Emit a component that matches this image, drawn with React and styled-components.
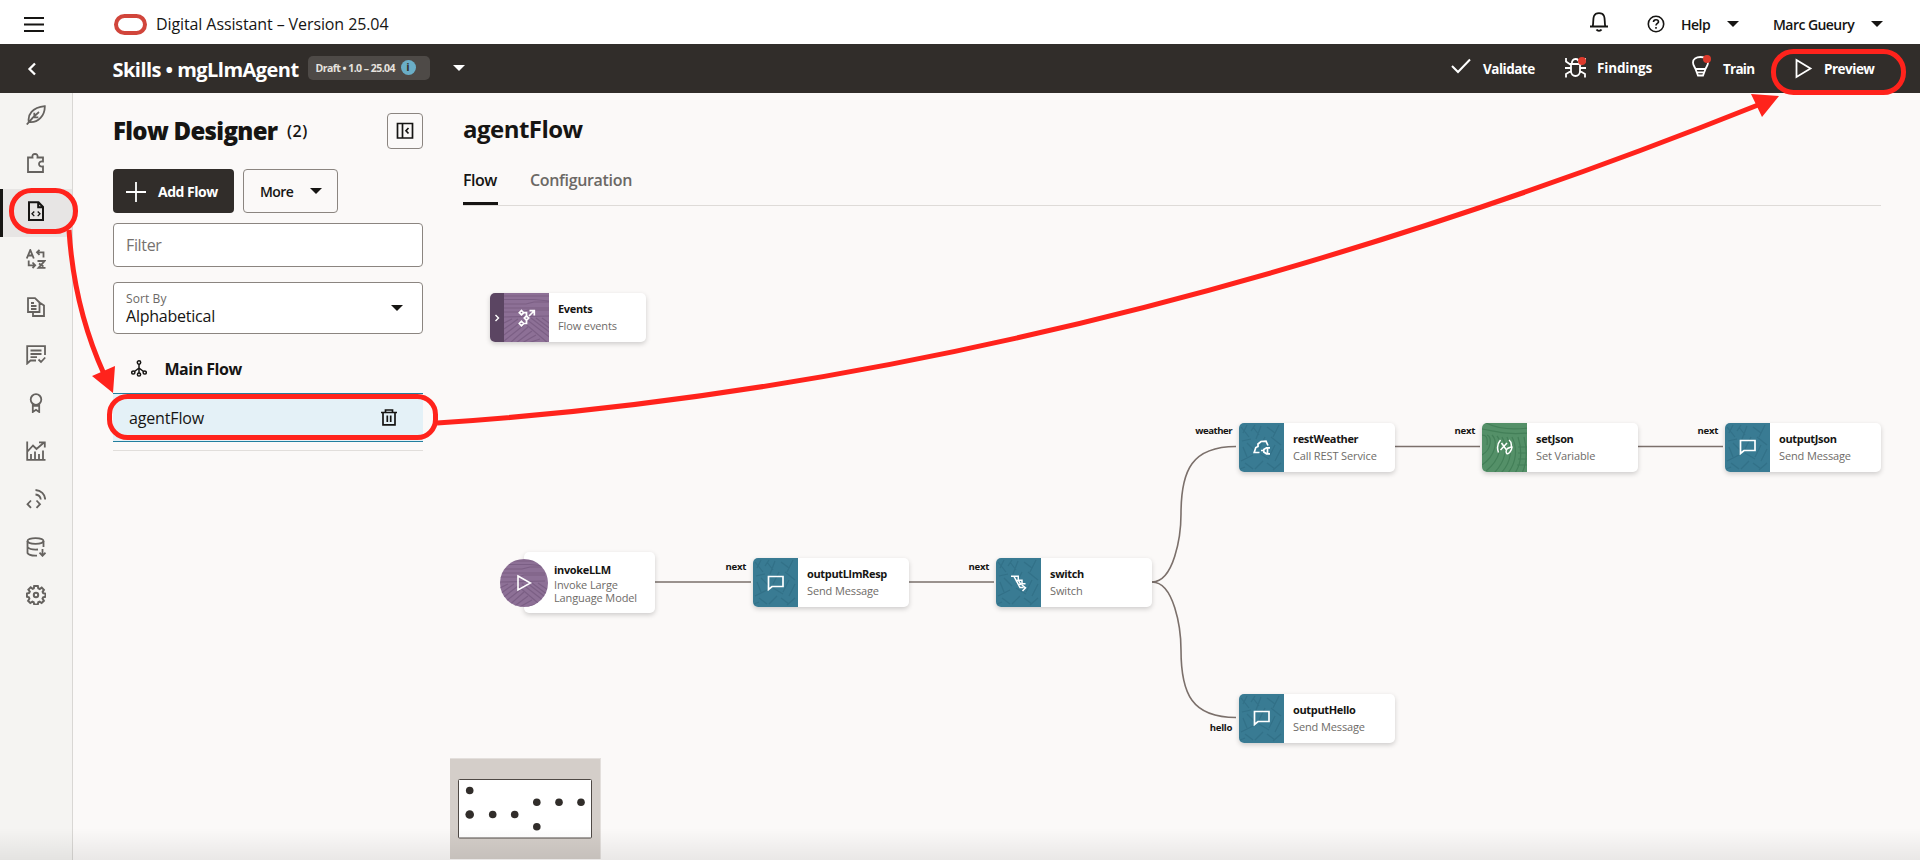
import React from "react";
import styled, { createGlobalStyle } from "styled-components";

const GlobalStyle = createGlobalStyle`
  *, *::before, *::after { box-sizing: border-box; }
  body {
    margin: 0;
    background: #fbf9f8;
    color: #161513;
    font-family: "Open Sans", "Noto Sans", sans-serif;
    overflow: hidden;
  }
  svg { display: block; flex: none; }
`;

const Page = styled.div`
  position: relative;
  width: 1920px;
  height: 860px;
  display: flex;
  flex-direction: column;
  overflow: hidden;
`;

const Label = styled.span`
  display: block;
  flex: none;
  white-space: nowrap;
  width: ${(p) => (p.$w ? `${p.$w}px` : "auto")};
  font-size: ${(p) => p.$size || 14}px;
  font-weight: ${(p) => p.$weight || 400};
  letter-spacing: ${(p) => p.$track || 0}px;
  line-height: ${(p) => p.$line || 20}px;
  color: ${(p) => p.$color || "inherit"};
  margin-left: ${(p) => p.$gap || 0}px;
  margin-top: ${(p) => p.$top || 0}px;
`;

const TopBar = styled.header`
  height: 44px;
  flex: none;
  display: flex;
  align-items: center;
  padding: 4px 37px 0 24px;
  background: #fff;
`;

const Caret = styled.i`
  flex: none;
  width: 0;
  height: 0;
  border: 6px solid transparent;
  border-top: 6.5px solid currentColor;
  border-bottom: 0;
  margin-left: ${(p) => p.$gap || 0}px;
  margin-bottom: ${(p) => p.$lift || 0}px;
`;

const OracleMark = styled.div`
  width: 33px;
  height: 21px;
  margin-left: 70px;
  border: 4px solid #d1453b;
  border-radius: 11px;
`;

const Spacer = styled.div`
  flex: 1;
`;

const IconSlot = styled.span`
  position: relative;
  display: block;
  flex: none;
  margin-left: ${(p) => p.$gap || 0}px;
  margin-top: ${(p) => p.$top || 0}px;
`;

const SkillBar = styled.div`
  height: 49px;
  flex: none;
  display: flex;
  align-items: center;
  padding: 0 45px 0 27px;
  background: #312d2a;
  color: #fff;
`;

const VersionBadge = styled.div`
  display: flex;
  align-items: center;
  width: 122px;
  height: 24px;
  margin: 0 0 2px 9px;
  padding-left: 8px;
  border-radius: 5px;
  background: #4e4a47;
  color: #e6e2df;
`;

const InfoDot = styled.b`
  width: 15px;
  height: 15px;
  margin-left: 5px;
  border-radius: 50%;
  background: #6aaec7;
  color: #33302d;
  font-size: 11px;
  line-height: 14.5px;
  text-align: center;
`;

const AlertDot = styled.i`
  position: absolute;
  top: ${(p) => p.$top}px;
  right: ${(p) => p.$right}px;
  width: 8px;
  height: 8px;
  border-radius: 50%;
  background: #dd3a2c;
`;

const Body = styled.div`
  flex: 1;
  display: flex;
  min-height: 0;
`;

const Rail = styled.nav`
  width: 73px;
  flex: none;
  background: #f5f4f2;
  border-right: 1px solid #d9d7d4;
`;

const RailItem = styled.div`
  height: 48px;
  display: flex;
  align-items: center;
  justify-content: center;
  padding-bottom: 4px;
  padding-right: ${(p) => (p.$active ? 3 : 0)}px;
  color: ${(p) => (p.$active ? "#161513" : "#65625f")};
  background: ${(p) => (p.$active ? "#e7e5e4" : "transparent")};
  border-left: ${(p) => (p.$active ? "3px solid #161513" : "0")};
`;

const FlowPanel = styled.aside`
  width: 350px;
  flex: none;
  padding: 20px 0 0 40px;
`;

const PanelHead = styled.div`
  display: flex;
  align-items: center;
  height: 36px;
`;

const CollapseButton = styled.button`
  width: 36px;
  height: 36px;
  margin: 0 0 0 auto;
  padding: 0;
  display: grid;
  place-items: center;
  border: 1px solid #8b8580;
  border-radius: 4px;
  background: transparent;
  color: #161513;
`;

const ButtonRow = styled.div`
  display: flex;
  gap: 9px;
  margin: 20px 0 10px;
`;

const Button = styled.button`
  height: 44px;
  width: ${(p) => p.$w}px;
  display: flex;
  align-items: center;
  padding: 1px 0 0 ${(p) => p.$pad}px;
  border: ${(p) => (p.$solid ? "0" : "1px solid #8b8580")};
  border-radius: 4px;
  background: ${(p) => (p.$solid ? "#312d2a" : "transparent")};
  color: ${(p) => (p.$solid ? "#fff" : "#161513")};
  font-family: inherit;
`;

const FilterField = styled.div`
  height: 44px;
  display: flex;
  align-items: center;
  padding: 0 12px;
  border: 1px solid #8b8580;
  border-radius: 4px;
  background: #fff;
`;

const SortField = styled.div`
  height: 52px;
  margin-top: 15px;
  padding: 0 19px 1px 12px;
  display: flex;
  align-items: center;
  justify-content: space-between;
  border: 1px solid #8b8580;
  border-radius: 4px;
  background: #fff;
`;

const MainFlowRow = styled.div`
  height: 59px;
  display: flex;
  align-items: center;
  padding: 10px 0 0 18px;
`;

const FlowRow = styled.div`
  height: 49px;
  display: flex;
  align-items: center;
  justify-content: space-between;
  padding: 0 26px 0 16px;
  background: #e4f1f7;
  border: solid #227e9e;
  border-width: 1px 0;
`;

const PanelRule = styled.div`
  height: 1px;
  margin-top: 8px;
  background: #e1dedb;
`;

const Main = styled.main`
  flex: 1;
  display: flex;
  flex-direction: column;
  padding-left: 27px;
`;

const MainHead = styled.div`
  margin-left: 13px;
  height: 113px;
  width: 1418px;
  padding-top: 26px;
  border-bottom: 1px solid #dedbd8;
`;

const Tabs = styled.div`
  display: flex;
  gap: 32px;
  margin-top: 25px;
`;

const Tab = styled.div`
  height: 41px;
  padding-top: 6px;
  border-bottom: 3px solid ${(p) => (p.$active ? "#161513" : "transparent")};
  color: ${(p) => (p.$active ? "#161513" : "#6b6865")};
`;

/* The designer surface; nodes sit at free coordinates measured from its corner. */
const Canvas = styled.section`
  position: relative;
  flex: 1;
`;

const Edges = styled.svg`
  position: absolute;
  inset: 0;
`;

const EdgeLabel = styled.span`
  position: absolute;
  right: ${(p) => 1470 - p.$x}px;
  top: ${(p) => p.$y - 8}px;
  font-size: 9.6px;
  font-weight: 700;
  letter-spacing: ${(p) => (p.$long ? -0.5 : -0.32)}px;
  line-height: 16px;
`;

const NodeCard = styled.div`
  position: absolute;
  left: ${(p) => p.$x}px;
  top: ${(p) => p.$y}px;
  width: 155.5px;
  height: 49px;
  display: flex;
  overflow: hidden;
  border-radius: 5px;
  background: #fff;
  box-shadow: 0 2px 5px rgba(0, 0, 0, 0.18);
`;

const StartCard = styled(NodeCard)`
  width: 131px;
  height: 61px;
  overflow: visible;
  align-items: center;
`;

const Tile = styled.div`
  width: 45px;
  height: 49px;
  flex: none;
  display: grid;
  grid-template: 100% / 100%;
  place-items: center;
  overflow: hidden;
  color: #fff;
  & > svg { grid-area: 1 / 1; }
`;

const StartDisc = styled(Tile)`
  width: 48px;
  height: 48px;
  margin-left: -24px;
  border-radius: 50%;
`;

const Expander = styled.div`
  width: 14px;
  flex: none;
  display: grid;
  place-items: center;
  background: #5b4562;
  color: #fff;
`;

const NodeText = styled.div`
  padding: ${(p) => (p.$start ? "0 0 1px 6px" : "7px 0 0 9px")};
`;

const NodeName = styled.div`
  font-size: 11px;
  font-weight: 700;
  letter-spacing: -0.34px;
  line-height: 17px;
  white-space: nowrap;
`;

const NodeKind = styled.div`
  font-size: 11px;
  letter-spacing: -0.12px;
  line-height: ${(p) => (p.$start ? 13 : 17)}px;
  color: #6e6b68;
  white-space: pre;
`;

const MiniMap = styled.div`
  position: absolute;
  left: 0;
  bottom: 1px;
  width: 151px;
  height: 101px;
  padding: 20px 9px 0 8px;
  background: #d4cec9;
  border: solid #e3dfdc;
  border-width: 1px 1px 0 0;
`;

const BottomShade = styled.div`
  position: absolute;
  left: 0;
  right: 0;
  bottom: 0;
  height: 32px;
  background: linear-gradient(rgba(0, 0, 0, 0), rgba(0, 0, 0, 0.07));
`;

const Markup = styled.svg`
  position: absolute;
  inset: 0;
`;

function Icon({ w = 20, h = 20, sw = 1.8, children }) {
  return (
    <svg width={w} height={h} viewBox={`0 0 ${w} ${h}`} fill="none" stroke="currentColor" strokeWidth={sw}>
      {children}
    </svg>
  );
}

const railIcons = [
  <Icon key="feather">
    <path d="M2.800 17C1.500 10 6 2.500 18.800 1.200C19 10 12.500 18.200 2.800 17ZM.8 19.500C4 15.500 8 11 13 7M8.300 12V7.800M8 12.300H12.300" />
  </Icon>,
  <Icon key="puzzle">
    <path d="M2 4.500H6.500C6 1.800 7.500 1 9 1s3 .8 2.500 3.500H17V8.500C14.200 8 13 9.500 13 11s1.200 3 4 2.500V19H2Z" />
  </Icon>,
  <Icon key="flow" sw={2}>
    <path d="M3 1.200H12.500L17 6V19H3ZM12.200 1.500V6.200H17" />
    <path d="M8.300 10.500L6 12.800L8.300 15.100M11.700 10.500L14 12.800L11.700 15.100" strokeWidth="1.300" />
  </Icon>,
  <Icon key="translate">
    <path d="M.8 9.500L4.300 1L7.800 9.500M2 6.500H6.800M13.500 .8L11 3.300L13.500 5.800M11 3.300H17.500V8.500M2.700 11.500V16.300H8.800M6.500 13.500L9.200 16.300L6.500 19M11.500 12H18.500L12.500 18.800H19.500M13 14.500L17.500 17.500" />
  </Icon>,
  <Icon key="docs">
    <path d="M2 1.200H9L13.500 5.500V15H2ZM13.500 5.500L18 8.500V19H7V15M5 6H8M5 9H10.500M5 12H10.500" />
  </Icon>,
  <Icon key="survey">
    <path d="M19 10V1.200H1.200V18.500L4.500 15.500H10M4.500 5.500H15.500M4.500 9H15.500M4.500 12.200H11M12.500 14.500L15 17L19.200 12.500" />
  </Icon>,
  <Icon key="ribbon">
    <circle cx="10" cy="6.500" r="5.300" />
    <path d="M6.800 11V19L10 16.800L13.200 19V11M7 12.800H13" />
  </Icon>,
  <Icon key="insights">
    <path d="M1.200 .5V18.900H19.500M1.500 10.500L7 4.500L10.500 8L18 1.500M13 1.300H18.800V6.500M5 18V13M9 18V10.500M13 18V13M17 18V9.500" />
  </Icon>,
  <Icon key="channels">
    <path d="M5 11.500L1.500 15.200L5 18.900M10.500 11.500L14 15.200L10.500 18.900M9.500 5.500C12.500 5.800 14.500 8 14.800 10.500M9.500 1C15 1.300 19 5.300 19.200 10.500" />
  </Icon>,
  <Icon key="data">
    <ellipse cx="9.500" cy="4" rx="8" ry="2.900" />
    <path d="M1.500 4V16C2.500 18 6.500 18.800 11 18.600M17.500 4V10M1.500 10C3.500 12.500 8 12.800 12 12.500M16.500 12V18.500M13.500 15.700L16.500 18.800L19.500 15.700" />
  </Icon>,
  <Icon key="settings" sw={2}>
    <path d="M8.200 1h3.600l.5 2.400 1.400.6 2-1.400 2.200 2.200-1.300 2.100.6 1.300 2.300.5v3.100l-2.400.5-.6 1.300 1.400 2.200-2.300 2.200-2-1.300-1.300.6-.5 2.200H8.200l-.5-2.300-1.300-.5-2.100 1.300-2.200-2.200 1.300-2.100-.5-1.400L.9 11.800V8.500l2.300-.5.6-1.400-1.400-2L4.700 2.400l2 1.400 1.100-.5Z" />
    <circle cx="10" cy="10" r="2.200" />
  </Icon>,
];

const textures = {
  purple: {
    base: "#8d7096",
    line: "#755a7f",
    d: "M0 3H45M0 6.500H30L45 8M0 11H22L30 9H45M0 15H45M0 19H18L24 17H45M0 24L45 23M0 30L8 26M0 36L14 26M0 42L18 28M0 48L20 32M6 50L24 34M12 50L28 38M18 50L32 42M24 50L36 46M22 26L48 46M27 25L48 41M32 25L48 37M38 25L48 32M18 28L44 50",
  },
  teal: {
    base: "#397b93",
    line: "#306d84",
    d: "M2 4L10 14M8 2L4 10M14 4L20 12M22 3L17 16M28 4L36 10M40 2L34 14M3 18L12 16M8 20L16 28M26 14L20 26M32 14L42 22M4 24L8 34M14 32L2 38M20 30L30 36M36 22L30 34M42 26L36 38M6 40L14 46M24 38L16 46M28 40L36 46M42 40L34 47M1 46L6 44M12 8L16 2",
  },
  green: {
    base: "#549068",
    line: "#3e7a53",
    d: "M0 6C14 8 22 12 46 10M4 0C16 6 30 7 46 5M0 12C4 12 6 14 5 22M5 12C10 14 10 26 0 32M10 12C16 18 14 32 0 42M15 13C21 20 19 36 4 48M20 14C26 24 24 38 12 50M25 14C31 26 29 40 19 50M30 14C36 26 34 40 26 50M36 14C40 26 40 40 33 50M42 14C45 26 45 40 40 50M36 24H45M36 30H45M36 36H45M35 42H45",
  },
};

function Texture({ kind, width = 45 }) {
  const t = textures[kind];
  return (
    <svg width={width} height="49" viewBox={`0 0 ${width} 49`}>
      <rect width="48" height="49" fill={t.base} />
      <path d={t.d} fill="none" stroke={t.line} strokeWidth="1.2" opacity="0.75" />
    </svg>
  );
}

const nodeIcons = {
  events: (
    <Icon w={18} h={18} sw={1.7}>
      <path d="M3.500 1.500L5.700 3.700L3.500 5.900L1.300 3.700ZM3.500 12.300L5.700 14.500L3.500 16.700L1.300 14.500ZM8.500 6.800L10.700 9L8.500 11.200L6.300 9ZM5.700 3.700H8.500V6.800M5.700 14.500H8.500V11.200M11 7L16 2M11.500 1.600H16.300V6.500" />
    </Icon>
  ),
  message: (
    <Icon w={18} h={16} sw={1.7}>
      <path d="M1.500 1.500H16V11.500H5L1.500 14.500Z" />
    </Icon>
  ),
  split: (
    <Icon w={18} h={18} sw={1.5}>
      <path d="M1 2.200H8.300V6.500M4 2.500L10 13.500H13.500M8 6.300H12V9.500M8.300 6.300L11.500 11.200M12 9.800H15.500M12 11L15.500 13.800L12.500 17M5.500 6.500L8 6.300M8.500 10.500L12 9.800" />
    </Icon>
  ),
  rest: (
    <Icon w={18} h={18} sw={1.7}>
      <path d="M6.500 14.500H1.200L2.800 9.500L5 8.500V6L8 3.500L13 3.200L15 7.500M8 12.500H10.500M17 9.800H13.500L10.800 11.500V14L13.500 15.800H17M14.500 9.800V15.800" />
    </Icon>
  ),
  variable: (
    <Icon w={18} h={18} sw={1.5}>
      <path d="M4.500 2C1 6 .8 10 2.500 14.500M5.500 5L10.500 12M11 5L4.500 12M13 2C15 3.500 15.600 5.500 15.300 8M16.200 8.500L11.500 10.500C9.800 11.800 9.800 14.500 10.800 15.600C12.300 16.500 15.500 13.500 16.200 8.500" />
    </Icon>
  ),
};

const nodes = [
  { x: 303, y: 352, name: "outputLlmResp", kind: "Send Message", icon: "message", tone: "teal" },
  { x: 546, y: 352, name: "switch", kind: "Switch", icon: "split", tone: "teal" },
  { x: 789, y: 216.500, name: "restWeather", kind: "Call REST Service", icon: "rest", tone: "teal" },
  { x: 1032, y: 216.500, name: "setJson", kind: "Set Variable", icon: "variable", tone: "green" },
  { x: 1275, y: 216.500, name: "outputJson", kind: "Send Message", icon: "message", tone: "teal" },
  { x: 789, y: 487.500, name: "outputHello", kind: "Send Message", icon: "message", tone: "teal" },
];

const edgeLabels = [
  { x: 296, y: 361, text: "next" },
  { x: 539, y: 361, text: "next" },
  { x: 782, y: 225, text: "weather" },
  { x: 1025, y: 225, text: "next" },
  { x: 1268, y: 225, text: "next" },
  { x: 782, y: 522, text: "hello" },
];

const mapDots = [
  [11.7, 11.5, 3.8], [11.7, 35.5, 4.3], [34.7, 35.5, 3.8], [56.7, 35.5, 3.8],
  [78.8, 23.2, 3.8], [101, 23.2, 3.8], [123, 23.2, 3.8], [78.8, 47.8, 3.8],
];

function Node({ x, y, name, kind, icon, tone, expandable }) {
  return (
    <NodeCard $x={x} $y={y}>
      {expandable && (
        <Expander>
          <Icon w={6} h={8} sw={1.4}><path d="M1.500 1L4.500 4L1.500 7" /></Icon>
        </Expander>
      )}
      <Tile>
        <Texture kind={tone} />
        {nodeIcons[icon]}
      </Tile>
      <NodeText>
        <NodeName>{name}</NodeName>
        <NodeKind>{kind}</NodeKind>
      </NodeText>
    </NodeCard>
  );
}

export default function App() {
  return (
    <Page>
      <GlobalStyle />
      <TopBar>
        <Icon w={20} h={16} sw={2}><path d="M0 2H20M0 8.500H20M0 15H20" /></Icon>
        <OracleMark />
        <Label $size={16} $w={234} $track={-0.1} $gap={9} $line={24}>
          Digital Assistant – Version 25.04
        </Label>
        <Spacer />
        <IconSlot $top={-4}>
          <Icon w={18} h={20} sw={1.8}>
            <path d="M0 14.500H18M2.800 14C3.600 11 2.700 7 4 4C5 1.800 7 1.200 9 1.200S13 1.800 14 4C15.300 7 14.400 11 15.200 14M6.500 17.500C7.500 19.200 10.500 19.200 11.500 17.500" />
          </Icon>
        </IconSlot>
        <IconSlot $gap={39}>
          <Icon w={18} h={18} sw={1.6}>
            <circle cx="9" cy="9" r="7.700" />
            <path d="M6.500 7C6.500 5.500 7.600 4.700 9 4.700S11.500 5.600 11.500 6.900C11.500 8.400 9 8.500 9 10.500M9 12V13.700" />
          </Icon>
        </IconSlot>
        <Label $weight={600} $w={29} $track={-0.5} $gap={16} $top={1}>Help</Label>
        <Caret $gap={17} />
        <Label $weight={600} $w={81} $track={-0.55} $gap={34} $top={1}>Marc Gueury</Label>
        <Caret $gap={17} />
      </TopBar>

      <SkillBar>
        <Icon w={10} h={14} sw={2.3}><path d="M8 1.500L2.500 7L8 12.500" /></Icon>
        <Label $size={20} $weight={700} $w={186} $track={-0.54} $gap={75.5} $line={28} $top={3}>Skills • mgLlmAgent</Label>
        <VersionBadge>
          <Label $size={10.5} $weight={700} $w={80} $track={-0.53}>Draft • 1.0 – 25.04</Label>
          <InfoDot>i</InfoDot>
        </VersionBadge>
        <Caret $gap={23} $lift={1} />
        <Spacer />
        <IconSlot $top={-5}>
          <Icon w={20} h={16} sw={2}><path d="M1 8L7 14L19 1.500" /></Icon>
        </IconSlot>
        <Label $size={13.5} $weight={700} $w={52} $track={-0.5} $gap={12}>Validate</Label>
        <IconSlot $gap={30} $top={-2}>
          <Icon w={21} h={21} sw={1.8}>
            <path d="M6 7H15V14C15 17 13 19 10.500 19S6 17 6 14ZM6.800 7C6.800 3.500 8 2 10.500 2S14.200 3.500 14.200 7M1 1V4.500L6 8M20 1V4.500L15 8M0 11H6M15 11H21M1 20.500V17L6 14M20 20.500V17L15 14" />
          </Icon>
          <AlertDot $top={0} $right={0} />
        </IconSlot>
        <Label $size={13.5} $weight={700} $w={56} $track={-0.16} $gap={11} $top={-1}>Findings</Label>
        <IconSlot $gap={39} $top={-4}>
          <Icon w={17} h={21} sw={1.8}>
            <path d="M3.500 13C2.500 10.500 1 9 1 6.500C1 3 4 1 8.500 1S16 3 16 6.500C16 9 14.500 10.500 13.500 13L11 19.500H6ZM3.500 13H13.500M5 16.300H12" />
          </Icon>
          <AlertDot $top={-1} $right={-2} />
        </IconSlot>
        <Label $size={13.5} $weight={700} $w={32} $track={-0.75} $gap={14}>Train</Label>
        <IconSlot $gap={40} $top={-1}>
          <Icon w={18} h={21} sw={1.8}><path d="M1.500 2L15.500 10.500L1.500 19Z" /></Icon>
        </IconSlot>
        <Label $size={13.5} $weight={700} $w={51} $track={-0.5} $gap={11}>Preview</Label>
      </SkillBar>

      <Body>
        <Rail>
          {railIcons.map((icon, i) => (
            <RailItem key={icon.key} $active={i === 2}>{icon}</RailItem>
          ))}
        </Rail>

        <FlowPanel>
          <PanelHead>
            <Label $size={24} $weight={800} $w={165} $track={-0.7} $line={32}>Flow Designer</Label>
            <Label $size={16} $weight={600} $track={0.5} $gap={9}>(2)</Label>
            <CollapseButton>
              <Icon w={18} h={18} sw={1.7}><path d="M1.500 1.500H16.500V16H1.500ZM6.500 1.500V16M12.500 6L10 8.700L12.500 11.500" /></Icon>
            </CollapseButton>
          </PanelHead>
          <ButtonRow>
            <Button $solid $w={121} $pad={13}>
              <Icon w={20} h={20} sw={1.8}><path d="M10 0V20M0 10H20" /></Icon>
              <Label $weight={700} $track={-0.5} $gap={12}>Add Flow</Label>
            </Button>
            <Button $w={95} $pad={16}>
              <Label $weight={600} $w={33} $track={-0.55}>More</Label>
              <Caret $gap={16.5} $lift={2} />
            </Button>
          </ButtonRow>
          <FilterField>
            <Label $size={16} $track={-0.35} $color="#76726f">Filter</Label>
          </FilterField>
          <SortField>
            <div>
              <Label $size={12} $track={0.1} $line={17} $color="#6b6865">Sort By</Label>
              <Label $size={16} $track={-0.23} $line={18}>Alphabetical</Label>
            </div>
            <Caret />
          </SortField>
          <MainFlowRow>
            <Icon w={16} h={17} sw={1.5}>
              <circle cx="8" cy="2.500" r="1.700" />
              <circle cx="2.300" cy="12.500" r="1.600" />
              <circle cx="8" cy="14.500" r="1.600" />
              <circle cx="13.700" cy="12.500" r="1.600" />
              <path d="M8 4V13M8 8L3.500 11.500M8 8L12.500 11.500" />
            </Icon>
            <Label $size={16} $weight={700} $track={-0.5} $gap={17.5}>Main Flow</Label>
          </MainFlowRow>
          <FlowRow>
            <Label $size={16} $track={-0.15}>agentFlow</Label>
            <Icon w={16} h={17} sw={1.7}>
              <path d="M0 3.500H16M4.500 3.500V1H11.500V3.500M2 3.500V15.800H14V3.500M6.300 6.500V13M9.700 6.500V13" />
            </Icon>
          </FlowRow>
          <PanelRule />
        </FlowPanel>

        <Main>
          <MainHead>
            <Label $size={24} $weight={700} $track={-0.53}>agentFlow</Label>
            <Tabs>
              <Tab $active><Label $size={16} $weight={600} $w={35} $track={-0.5}>Flow</Label></Tab>
              <Tab><Label $size={16} $weight={600} $track={-0.33}>Configuration</Label></Tab>
            </Tabs>
          </MainHead>
          <Canvas>
            <Edges width="1470" height="654" fill="none" stroke="#7b706b" strokeWidth="1.600">
              <path d="M205 376H301M458 376H544M944 240.500H1030M1187 240.500H1273" />
              <path d="M702 376C724 376 731 330 731 308C731 264 742 240.500 786 240.500" />
              <path d="M702 376C724 376 731 422 731 444C731 488 742 511.500 786 511.500" />
            </Edges>
            {edgeLabels.map((l) => (
              <EdgeLabel key={`${l.x}-${l.y}`} $x={l.x} $y={l.y} $long={l.text.length > 5}>{l.text}</EdgeLabel>
            ))}
            <Node x={40} y={87} name="Events" kind="Flow events" icon="events" tone="purple" expandable />
            <StartCard $x={74} $y={346}>
              <StartDisc>
                <Texture kind="purple" width={48} />
                <Icon w={16} h={18} sw={1.6}><path d="M2 2L14.500 9L2 16Z" /></Icon>
              </StartDisc>
              <NodeText $start>
                <NodeName>invokeLLM</NodeName>
                <NodeKind $start>{"Invoke Large\nLanguage Model"}</NodeKind>
              </NodeText>
            </StartCard>
            {nodes.map((n) => <Node key={n.name} {...n} />)}
            <MiniMap>
              <svg width="134" height="60">
                <rect x="0.500" y="0.500" width="133" height="58.500" rx="1" fill="#fff" stroke="#4f4945" />
                {mapDots.map(([cx, cy, r], i) => <circle key={i} cx={cx} cy={cy} r={r} fill="#312d2a" />)}
              </svg>
            </MiniMap>
          </Canvas>
        </Main>
      </Body>

      <BottomShade />

      <Markup width="1920" height="860" fill="none" stroke="#ff231c" strokeWidth="5">
        <rect x="11.500" y="190.500" width="64" height="41" rx="20" />
        <rect x="109.500" y="396.500" width="326" height="41" rx="18" />
        <rect x="1773.500" y="51.500" width="130" height="41" rx="20" />
        <path d="M69 230Q74 308 104 374M437 423Q1065 382 1758 105" />
        <path d="M113 393L92 376L115 366ZM1779 96L1751 94L1762 117Z" fill="#ff231c" stroke="none" />
      </Markup>
    </Page>
  );
}
